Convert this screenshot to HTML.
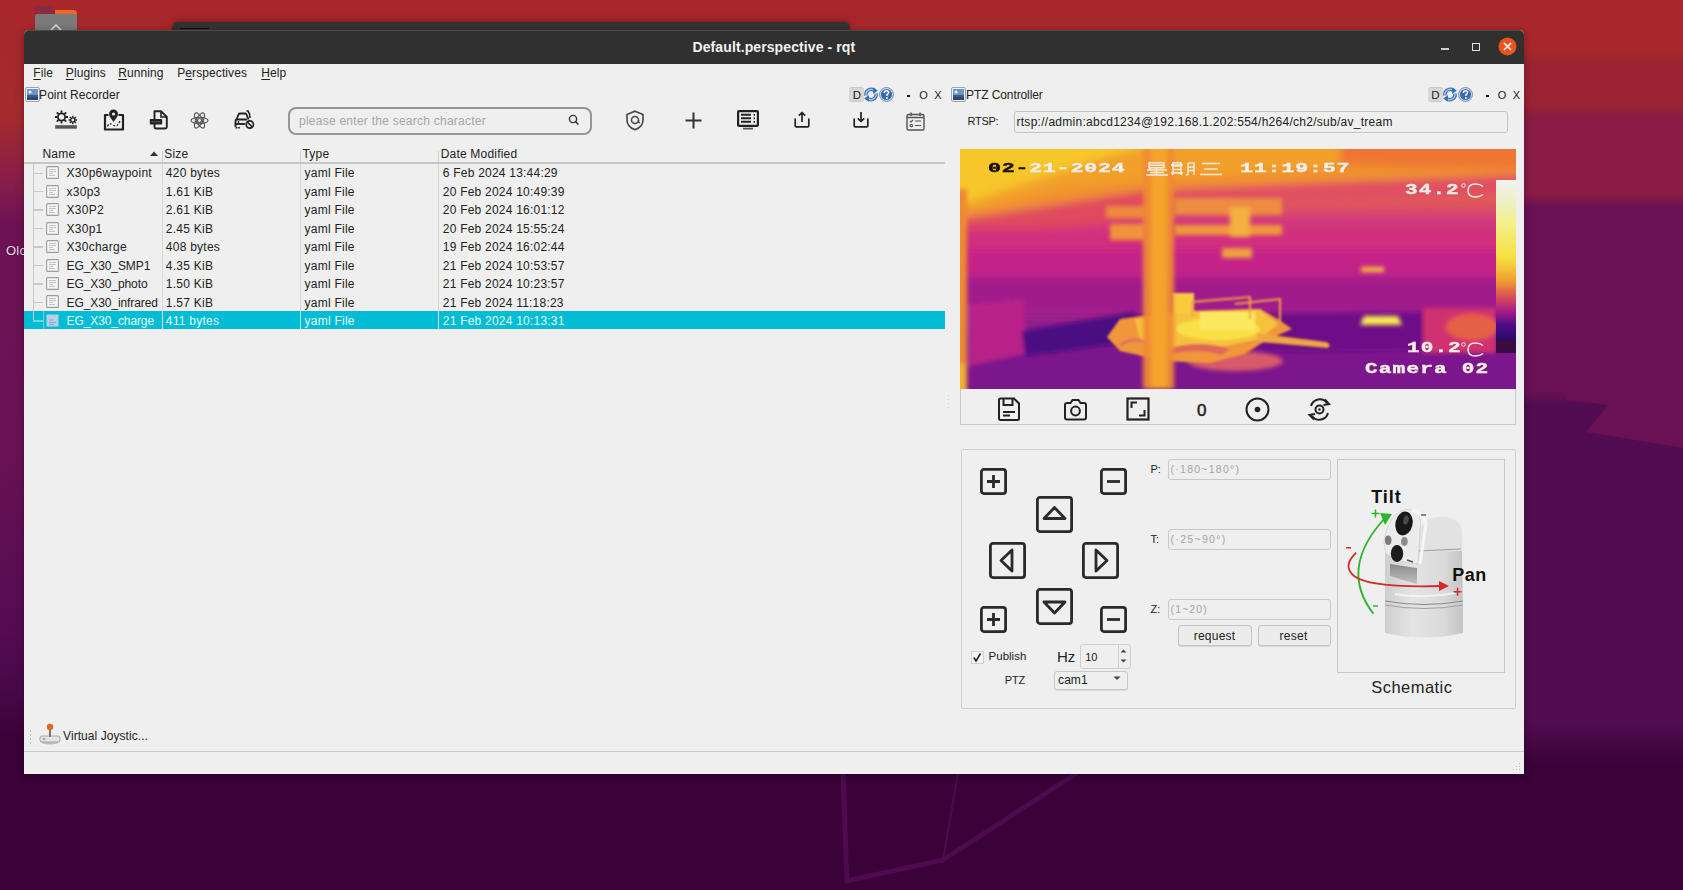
<!DOCTYPE html>
<html><head><meta charset="utf-8">
<style>
*{margin:0;padding:0;box-sizing:border-box}
html,body{width:1683px;height:890px;overflow:hidden;font-family:"Liberation Sans",sans-serif;color:#222;position:relative}
.a{position:absolute}
.t{position:absolute;white-space:pre;line-height:1}
#bg{left:0;top:0;width:1683px;height:890px}
.u{text-decoration:underline;text-underline-offset:2px;text-decoration-thickness:1px}
svg.a{overflow:visible}
</style></head><body>
<div id="bg" class="a"><svg width="1683" height="890" viewBox="0 0 1683 890">
 <defs>
  <linearGradient id="gR" x1="0" y1="0" x2="0" y2="1">
   <stop offset="0" stop-color="#a8272b"/>
   <stop offset="0.056" stop-color="#a8272b"/>
   <stop offset="0.072" stop-color="#9b2432"/>
   <stop offset="0.118" stop-color="#9a2332"/>
   <stop offset="0.132" stop-color="#8a1c46"/>
   <stop offset="0.218" stop-color="#8a1c46"/>
   <stop offset="0.234" stop-color="#6a1055"/>
   <stop offset="0.44" stop-color="#6a1055"/>
   <stop offset="0.455" stop-color="#520c50"/>
   <stop offset="0.81" stop-color="#520c50"/>
   <stop offset="0.86" stop-color="#3a0238"/>
   <stop offset="1" stop-color="#3a0238"/>
  </linearGradient>
  <linearGradient id="gL" x1="0" y1="0" x2="0" y2="1">
   <stop offset="0" stop-color="#a8272b"/>
   <stop offset="0.13" stop-color="#a52a2e"/>
   <stop offset="0.2" stop-color="#8a1e48"/>
   <stop offset="0.25" stop-color="#6e1255"/>
   <stop offset="0.5" stop-color="#6a1256"/>
   <stop offset="0.7" stop-color="#560c52"/>
   <stop offset="0.78" stop-color="#480848"/>
   <stop offset="0.83" stop-color="#3a0238"/>
   <stop offset="1" stop-color="#3a0238"/>
  </linearGradient>
 </defs>
 <rect width="1683" height="890" fill="#3a0238"/>
 <rect x="0" y="0" width="1683" height="50" fill="#a8272b"/>
 <rect x="1524" y="0" width="159" height="890" fill="url(#gR)"/>
 <rect x="0" y="0" width="24" height="890" fill="url(#gL)"/>
 <polygon points="1535,210 1683,210 1683,448 1586,432 1608,405 1567,400 1545,360 1535,300" fill="#6a1055"/>
 <path d="M843 773 L847 881 L943 860 L1077 773" fill="none" stroke="#4e0a4f" stroke-width="5"/>
 <path d="M958 773 L943 860" fill="none" stroke="#4e0a4f" stroke-width="2"/>
</svg></div><div class="t" style="left:6.00px;top:244.10px;font-size:13px;color:#eedcec;font-weight:400;letter-spacing:0.2px;text-shadow:0 0 2px rgba(0,0,0,0.5)">Olc</div><div class="a" style="left:172px;top:22px;width:678px;height:12px;background:#333333;border-radius:6px 6px 0 0;box-shadow:0 -2px 6px rgba(0,0,0,0.25)"></div><div class="a" style="left:180px;top:28.3px;width:29px;height:1.2px;background:#111"></div><svg class="a" style="left:33px;top:4px;" width="46" height="28" viewBox="0 0 46 28"><path d="M2 6 Q2 2 6 2 L18 2 L22 6 L40 6 Q44 6 44 10 L44 28 L2 28 Z" fill="#8c2a44"/><path d="M22 6 L40 6 Q44 6 44 10 L44 12 L22 12 Z" fill="#e8692a"/><rect x="2" y="10" width="42" height="18" rx="3" fill="#7a7a7a"/><path d="M16 28 L23 21 L30 28" fill="none" stroke="#ddd" stroke-width="1.5"/></svg><div class="a" style="left:24px;top:30px;width:1500px;height:743.5px;background:#efefef;border-radius:5px 5px 0 0;box-shadow:0 2px 10px rgba(0,0,0,0.3)"></div><div class="a" style="left:24px;top:30px;width:1500px;height:34px;background:#303030;border-radius:5px 5px 0 0;border-top:1px solid #4a4a4a"></div><div class="t" style="left:692.50px;top:39.95px;font-size:14px;color:#f2f2f2;font-weight:700;letter-spacing:0.1px;">Default.perspective - rqt</div><div class="a" style="left:1441px;top:48px;width:8px;height:1.5px;background:#cfcfcf"></div><div class="a" style="left:1472px;top:43px;width:8px;height:8px;border:1.5px solid #e0e0e0"></div><svg class="a" style="left:1498px;top:37px;" width="19" height="19" viewBox="0 0 19 19"><circle cx="9.5" cy="9.5" r="9" fill="#e95420"/><path d="M6 6 L13 13 M13 6 L6 13" stroke="#fff" stroke-width="1.6"/></svg><div class="t" style="left:33.30px;top:67.44px;font-size:12px;color:#222;font-weight:400;letter-spacing:0.1px;"><span class=u>F</span>ile</div><div class="t" style="left:65.80px;top:67.44px;font-size:12px;color:#222;font-weight:400;letter-spacing:0.1px;"><span class=u>P</span>lugins</div><div class="t" style="left:118.20px;top:67.44px;font-size:12px;color:#222;font-weight:400;letter-spacing:0.1px;"><span class=u>R</span>unning</div><div class="t" style="left:177.20px;top:67.44px;font-size:12px;color:#222;font-weight:400;letter-spacing:0.1px;">P<span class=u>e</span>rspectives</div><div class="t" style="left:261.30px;top:67.44px;font-size:12px;color:#222;font-weight:400;letter-spacing:0.1px;"><span class=u>H</span>elp</div><svg class="a" style="left:24.5px;top:87px;" width="15" height="15" viewBox="0 0 15 15"><rect x="0.5" y="0.5" width="14" height="14" rx="1.5" fill="#f4f4f4" stroke="#9aa4b0"/><rect x="2" y="2" width="11" height="11" fill="#3a5f8f"/><rect x="2" y="2" width="11" height="6" fill="#6d94c4"/><circle cx="5" cy="5" r="1.6" fill="#e8eef8"/><rect x="2" y="10" width="11" height="3" fill="#2c4a70"/></svg><div class="t" style="left:39.10px;top:88.94px;font-size:12px;color:#222;font-weight:400;letter-spacing:0.05px;">Point Recorder</div><svg class="a" style="left:951px;top:87px;" width="15" height="15" viewBox="0 0 15 15"><rect x="0.5" y="0.5" width="14" height="14" rx="1.5" fill="#f4f4f4" stroke="#9aa4b0"/><rect x="2" y="2" width="11" height="11" fill="#3a5f8f"/><rect x="2" y="2" width="11" height="6" fill="#6d94c4"/><circle cx="5" cy="5" r="1.6" fill="#e8eef8"/><rect x="2" y="10" width="11" height="3" fill="#2c4a70"/></svg><div class="t" style="left:966.10px;top:88.84px;font-size:12px;color:#222;font-weight:400;letter-spacing:-0.1px;">PTZ Controller</div><div class="a" style="left:849.0px;top:87.3px;width:15px;height:14.5px;background:#d8d8d8;border-radius:3px;border-top:1px solid #c8c8c8;border-bottom:1px solid #c8c8c8"></div><div class="t" style="left:852.80px;top:90.27px;font-size:11.5px;color:#1a1a1a;font-weight:400;">D</div><svg class="a" style="left:864.0px;top:87px;" width="14" height="15" viewBox="0 0 14 15"><g fill="none" stroke-linecap="butt"><path d="M2 8.5 A5.2 5.2 0 0 1 10.5 3.6" stroke="#3a6cb0" stroke-width="3.4"/><path d="M12 6.5 A5.2 5.2 0 0 1 3.5 11.4" stroke="#3a6cb0" stroke-width="3.4"/><path d="M2 8.5 A5.2 5.2 0 0 1 10.5 3.6" stroke="#9ccaf0" stroke-width="1.4"/><path d="M12 6.5 A5.2 5.2 0 0 1 3.5 11.4" stroke="#9ccaf0" stroke-width="1.4"/></g><path d="M9 0.3 L13.8 3.6 L9.2 7 Z" fill="#3a6cb0"/><path d="M5 8 L0.2 11.4 L4.8 14.7 Z" fill="#3a6cb0"/></svg><svg class="a" style="left:879.0px;top:87px;" width="15" height="15" viewBox="0 0 15 15"><circle cx="7.5" cy="7.5" r="6.9" fill="#e8f0fa" stroke="#3c6aa8" stroke-width="0.8"/><circle cx="7.5" cy="7.5" r="5.6" fill="#3a6aad"/><path d="M5.4 5.9 Q5.4 3.7 7.5 3.7 Q9.6 3.7 9.6 5.6 Q9.6 6.9 7.9 7.7 L7.9 9" fill="none" stroke="#fff" stroke-width="1.5"/><circle cx="7.9" cy="11" r="0.95" fill="#fff"/></svg><div class="a" style="left:907.0px;top:94.5px;width:3px;height:2px;background:#111"></div><div class="t" style="left:919.30px;top:89.69px;font-size:11px;color:#222;font-weight:400;">O</div><div class="t" style="left:934.30px;top:89.69px;font-size:11px;color:#222;font-weight:400;">X</div><div class="a" style="left:1427.5px;top:87.3px;width:15px;height:14.5px;background:#d8d8d8;border-radius:3px;border-top:1px solid #c8c8c8;border-bottom:1px solid #c8c8c8"></div><div class="t" style="left:1431.30px;top:90.27px;font-size:11.5px;color:#1a1a1a;font-weight:400;">D</div><svg class="a" style="left:1442.5px;top:87px;" width="14" height="15" viewBox="0 0 14 15"><g fill="none" stroke-linecap="butt"><path d="M2 8.5 A5.2 5.2 0 0 1 10.5 3.6" stroke="#3a6cb0" stroke-width="3.4"/><path d="M12 6.5 A5.2 5.2 0 0 1 3.5 11.4" stroke="#3a6cb0" stroke-width="3.4"/><path d="M2 8.5 A5.2 5.2 0 0 1 10.5 3.6" stroke="#9ccaf0" stroke-width="1.4"/><path d="M12 6.5 A5.2 5.2 0 0 1 3.5 11.4" stroke="#9ccaf0" stroke-width="1.4"/></g><path d="M9 0.3 L13.8 3.6 L9.2 7 Z" fill="#3a6cb0"/><path d="M5 8 L0.2 11.4 L4.8 14.7 Z" fill="#3a6cb0"/></svg><svg class="a" style="left:1457.5px;top:87px;" width="15" height="15" viewBox="0 0 15 15"><circle cx="7.5" cy="7.5" r="6.9" fill="#e8f0fa" stroke="#3c6aa8" stroke-width="0.8"/><circle cx="7.5" cy="7.5" r="5.6" fill="#3a6aad"/><path d="M5.4 5.9 Q5.4 3.7 7.5 3.7 Q9.6 3.7 9.6 5.6 Q9.6 6.9 7.9 7.7 L7.9 9" fill="none" stroke="#fff" stroke-width="1.5"/><circle cx="7.9" cy="11" r="0.95" fill="#fff"/></svg><div class="a" style="left:1485.5px;top:94.5px;width:3px;height:2px;background:#111"></div><div class="t" style="left:1497.80px;top:89.69px;font-size:11px;color:#222;font-weight:400;">O</div><div class="t" style="left:1512.80px;top:89.69px;font-size:11px;color:#222;font-weight:400;">X</div><svg class="a" style="left:54px;top:109px;" width="24" height="21" viewBox="0 0 24 21"><circle cx="7.5" cy="8" r="3.6" fill="none" stroke="#222" stroke-width="1.7"/><path d="M11.70 8.00 L14.10 8.00 M10.47 10.97 L12.17 12.67 M7.50 12.20 L7.50 14.60 M4.53 10.97 L2.83 12.67 M3.30 8.00 L0.90 8.00 M4.53 5.03 L2.83 3.33 M7.50 3.80 L7.50 1.40 M10.47 5.03 L12.17 3.33 " stroke="#222" stroke-width="1.8"/><circle cx="18.8" cy="11" r="2.1" fill="none" stroke="#222" stroke-width="1.4"/><path d="M21.40 11.00 L23.00 11.00 M20.64 12.84 L21.77 13.97 M18.80 13.60 L18.80 15.20 M16.96 12.84 L15.83 13.97 M16.20 11.00 L14.60 11.00 M16.96 9.16 L15.83 8.03 M18.80 8.40 L18.80 6.80 M20.64 9.16 L21.77 8.03 " stroke="#222" stroke-width="1.4"/><rect x="1.2" y="16.2" width="21.6" height="3.5" fill="#555"/></svg><svg class="a" style="left:103px;top:109px;" width="22" height="22" viewBox="0 0 22 22"><path d="M5.5 6 H2 V20.5 H20 V6 H15.5" fill="none" stroke="#222" stroke-width="2.2" stroke-linejoin="round"/><path d="M10.5 13 C8.5 10 6 7.5 6 5 A4.5 4.5 0 0 1 15 5 C15 7.5 12.5 10 10.5 13 Z" fill="#222"/><circle cx="10.5" cy="5" r="1.6" fill="#efefef"/><path d="M4.5 17.5 Q6 13 10 16 Q14 19 17 12" fill="none" stroke="#222" stroke-width="1.3" stroke-dasharray="2 1.6"/></svg><svg class="a" style="left:149px;top:110px;" width="20" height="20" viewBox="0 0 20 20"><path d="M5.5 1.2 H12 L17.8 7 V17 Q17.8 18.5 16.3 18.5 H7 Q5.5 18.5 5.5 17 Z" fill="none" stroke="#222" stroke-width="1.9" stroke-linejoin="round"/><path d="M12 1.2 V7 H17.8" fill="none" stroke="#222" stroke-width="1.6"/><rect x="0.8" y="9" width="12.4" height="5.5" rx="0.8" fill="#222"/><path d="M2.5 11.8 H11.5" stroke="#777" stroke-width="1" stroke-dasharray="1.5 0.8"/></svg><svg class="a" style="left:190px;top:112px;" width="19" height="17" viewBox="0 0 19 17"><g fill="none" stroke="#555" stroke-width="1.15"><ellipse cx="9.5" cy="8.5" rx="8.5" ry="3.3"/><ellipse cx="9.5" cy="8.5" rx="8.5" ry="3.3" transform="rotate(60 9.5 8.5)"/><ellipse cx="9.5" cy="8.5" rx="8.5" ry="3.3" transform="rotate(-60 9.5 8.5)"/><circle cx="9.5" cy="8.5" r="2"/></g></svg><svg class="a" style="left:234px;top:110px;" width="21" height="20" viewBox="0 0 21 20"><path d="M2.5 9.5 L4.5 4.5 Q5 3.5 6 3.5 H11 Q12 3.5 12.5 4.5 L14.5 9.5" fill="none" stroke="#222" stroke-width="1.8"/><path d="M1.5 17 V11 Q1.5 9.5 3 9.5 H13" fill="none" stroke="#222" stroke-width="1.9"/><path d="M1.5 14 H11" stroke="#222" stroke-width="1.9"/><circle cx="4.5" cy="12" r="0.9" fill="#222"/><path d="M2.5 17 V18.5 M5 17 V18.5" stroke="#222" stroke-width="1.8"/><path d="M12.5 1 L14 1 L15.5 4 L16 8" fill="none" stroke="#222" stroke-width="1.6"/><circle cx="15.8" cy="14.5" r="3.6" fill="#efefef" stroke="#222" stroke-width="1.7"/><path d="M13.3 12 L18.3 17" stroke="#222" stroke-width="1.7"/></svg><div class="a" style="left:288px;top:106.5px;width:303.5px;height:28px;border:2px solid #959595;border-radius:8px;background:#efefef"></div><div class="t" style="left:299.00px;top:115.14px;font-size:12px;color:#a6a6a6;font-weight:400;letter-spacing:0.25px;">please enter the search character</div><svg class="a" style="left:568px;top:114px;" width="12" height="12" viewBox="0 0 12 12"><circle cx="5" cy="5" r="3.6" fill="none" stroke="#333" stroke-width="1.4"/><path d="M7.6 7.6 L10.5 10.5" stroke="#333" stroke-width="1.5"/></svg><svg class="a" style="left:625px;top:110px;" width="20" height="21" viewBox="0 0 20 21"><path d="M10 1.2 L18 4.5 V10 C18 15 14.5 18.2 10 19.8 C5.5 18.2 2 15 2 10 V4.5 Z" fill="none" stroke="#444" stroke-width="1.6"/><circle cx="10" cy="10" r="3.5" fill="none" stroke="#444" stroke-width="1.5"/><path d="M13.5 10 V11.5 Q13.5 13 15 12.5" fill="none" stroke="#444" stroke-width="1.4"/></svg><svg class="a" style="left:685px;top:112px;" width="17" height="17" viewBox="0 0 17 17"><path d="M8.5 0.5 V16.5 M0.5 8.5 H16.5" stroke="#333" stroke-width="2"/></svg><svg class="a" style="left:737px;top:110px;" width="22" height="20" viewBox="0 0 22 20"><rect x="1.1" y="1.1" width="19.8" height="14.8" rx="1" fill="none" stroke="#222" stroke-width="2.2"/><path d="M4 4.8 H14 M4 8.3 H14 M4 11.8 H14" stroke="#222" stroke-width="2"/><path d="M16.5 4.8 H18 M16.5 8.3 H18 M16.5 11.8 H18" stroke="#222" stroke-width="1.8"/><path d="M6 18.6 H16" stroke="#555" stroke-width="1.8"/></svg><svg class="a" style="left:794px;top:111px;" width="16" height="17" viewBox="0 0 16 17"><path d="M1.2 7.5 V14.8 Q1.2 15.9 2.3 15.9 H13.7 Q14.8 15.9 14.8 14.8 V7.5" fill="none" stroke="#222" stroke-width="1.7" stroke-linejoin="round"/><path d="M8 11 V1.5 M4.8 4.7 L8 1.5 L11.2 4.7" fill="none" stroke="#222" stroke-width="1.7" stroke-linejoin="round"/></svg><svg class="a" style="left:853px;top:111px;" width="16" height="17" viewBox="0 0 16 17"><path d="M1.2 7.5 V14.8 Q1.2 15.9 2.3 15.9 H13.7 Q14.8 15.9 14.8 14.8 V7.5" fill="none" stroke="#222" stroke-width="1.7" stroke-linejoin="round"/><path d="M8 1 V10.5 M4.8 7.3 L8 10.5 L11.2 7.3" fill="none" stroke="#222" stroke-width="1.7" stroke-linejoin="round"/></svg><svg class="a" style="left:906px;top:112px;" width="19" height="19" viewBox="0 0 19 19"><rect x="1" y="2.5" width="17" height="15.5" rx="1.5" fill="none" stroke="#555" stroke-width="1.4"/><path d="M5 0.5 V4 M14 0.5 V4 M1 5.5 H18" stroke="#555" stroke-width="1.4"/><path d="M4 9 L5 10 L7 8 M9 9 H15 M9 13.5 H15" fill="none" stroke="#555" stroke-width="1.2"/><circle cx="5.3" cy="13.5" r="1.3" fill="none" stroke="#555" stroke-width="1.1"/></svg><div class="t" style="left:42.50px;top:147.84px;font-size:12px;color:#222;font-weight:400;letter-spacing:0.2px;">Name</div><svg class="a" style="left:150px;top:151px;" width="8" height="5" viewBox="0 0 8 5"><path d="M0 5 L4 0.5 L8 5 Z" fill="#333"/></svg><div class="t" style="left:164.20px;top:147.84px;font-size:12px;color:#222;font-weight:400;letter-spacing:0.2px;">Size</div><div class="t" style="left:302.50px;top:147.84px;font-size:12px;color:#222;font-weight:400;letter-spacing:0.2px;">Type</div><div class="t" style="left:440.70px;top:147.84px;font-size:12px;color:#222;font-weight:400;letter-spacing:0.2px;">Date Modified</div><div class="a" style="left:161.5px;top:151px;width:1px;height:11.5px;background:#d0d0d0"></div><div class="a" style="left:299.5px;top:151px;width:1px;height:11.5px;background:#d0d0d0"></div><div class="a" style="left:437.5px;top:151px;width:1px;height:11.5px;background:#d0d0d0"></div><div class="a" style="left:24px;top:162px;width:921px;height:1.5px;background:#c6c6c6"></div><div class="a" style="left:24px;top:311.2px;width:921px;height:18px;background:#00bcd4"></div><div class="a" style="left:162px;top:163.5px;width:1px;height:166px;background:#d8d8d8"></div><div class="a" style="left:300px;top:163.5px;width:1px;height:166px;background:#d8d8d8"></div><div class="a" style="left:438px;top:163.5px;width:1px;height:166px;background:#d8d8d8"></div><div class="a" style="left:42.5px;top:311.2px;width:1px;height:18px;background:#5fd3e3"></div><div class="a" style="left:32.5px;top:164px;width:1.5px;height:156px;background:#c8c8c8"></div><div class="a" style="left:33px;top:172.5px;width:10px;height:1.5px;background:#c8c8c8"></div><svg class="a" style="left:46px;top:166.29999999999998px;" width="13" height="13" viewBox="0 0 13 13"><rect x="0.6" y="0.6" width="11.8" height="11.8" rx="1" fill="#f6f6f6" stroke="#9c9c9c" stroke-width="1.1"/><path d="M3 3.5 H10 M3 5.5 H10 M3 7.5 H7 M3 9.5 H9" stroke="#c2c2c2" stroke-width="1"/></svg><div class="t" style="left:66.60px;top:167.44px;font-size:12px;color:#222;font-weight:400;letter-spacing:0.25px;">X30p6waypoint</div><div class="t" style="left:165.80px;top:167.44px;font-size:12px;color:#222;font-weight:400;letter-spacing:0.25px;">420 bytes</div><div class="t" style="left:304.50px;top:167.44px;font-size:12px;color:#222;font-weight:400;letter-spacing:0.25px;">yaml File</div><div class="t" style="left:442.80px;top:167.44px;font-size:12px;color:#222;font-weight:400;letter-spacing:0.22px;">6 Feb 2024 13:44:29</div><div class="a" style="left:33px;top:190.5px;width:10px;height:1.5px;background:#c8c8c8"></div><svg class="a" style="left:46px;top:184.74999999999997px;" width="13" height="13" viewBox="0 0 13 13"><rect x="0.6" y="0.6" width="11.8" height="11.8" rx="1" fill="#f6f6f6" stroke="#9c9c9c" stroke-width="1.1"/><path d="M3 3.5 H10 M3 5.5 H10 M3 7.5 H7 M3 9.5 H9" stroke="#c2c2c2" stroke-width="1"/></svg><div class="t" style="left:66.60px;top:185.89px;font-size:12px;color:#222;font-weight:400;letter-spacing:0.25px;">x30p3</div><div class="t" style="left:165.80px;top:185.89px;font-size:12px;color:#222;font-weight:400;letter-spacing:0.25px;">1.61 KiB</div><div class="t" style="left:304.50px;top:185.89px;font-size:12px;color:#222;font-weight:400;letter-spacing:0.25px;">yaml File</div><div class="t" style="left:442.80px;top:185.89px;font-size:12px;color:#222;font-weight:400;letter-spacing:0.22px;">20 Feb 2024 10:49:39</div><div class="a" style="left:33px;top:209.0px;width:10px;height:1.5px;background:#c8c8c8"></div><svg class="a" style="left:46px;top:203.2px;" width="13" height="13" viewBox="0 0 13 13"><rect x="0.6" y="0.6" width="11.8" height="11.8" rx="1" fill="#f6f6f6" stroke="#9c9c9c" stroke-width="1.1"/><path d="M3 3.5 H10 M3 5.5 H10 M3 7.5 H7 M3 9.5 H9" stroke="#c2c2c2" stroke-width="1"/></svg><div class="t" style="left:66.60px;top:204.34px;font-size:12px;color:#222;font-weight:400;letter-spacing:0.25px;">X30P2</div><div class="t" style="left:165.80px;top:204.34px;font-size:12px;color:#222;font-weight:400;letter-spacing:0.25px;">2.61 KiB</div><div class="t" style="left:304.50px;top:204.34px;font-size:12px;color:#222;font-weight:400;letter-spacing:0.25px;">yaml File</div><div class="t" style="left:442.80px;top:204.34px;font-size:12px;color:#222;font-weight:400;letter-spacing:0.22px;">20 Feb 2024 16:01:12</div><div class="a" style="left:33px;top:227.5px;width:10px;height:1.5px;background:#c8c8c8"></div><svg class="a" style="left:46px;top:221.64999999999998px;" width="13" height="13" viewBox="0 0 13 13"><rect x="0.6" y="0.6" width="11.8" height="11.8" rx="1" fill="#f6f6f6" stroke="#9c9c9c" stroke-width="1.1"/><path d="M3 3.5 H10 M3 5.5 H10 M3 7.5 H7 M3 9.5 H9" stroke="#c2c2c2" stroke-width="1"/></svg><div class="t" style="left:66.60px;top:222.79px;font-size:12px;color:#222;font-weight:400;letter-spacing:0.25px;">X30p1</div><div class="t" style="left:165.80px;top:222.79px;font-size:12px;color:#222;font-weight:400;letter-spacing:0.25px;">2.45 KiB</div><div class="t" style="left:304.50px;top:222.79px;font-size:12px;color:#222;font-weight:400;letter-spacing:0.25px;">yaml File</div><div class="t" style="left:442.80px;top:222.79px;font-size:12px;color:#222;font-weight:400;letter-spacing:0.22px;">20 Feb 2024 15:55:24</div><div class="a" style="left:33px;top:246.0px;width:10px;height:1.5px;background:#c8c8c8"></div><svg class="a" style="left:46px;top:240.09999999999997px;" width="13" height="13" viewBox="0 0 13 13"><rect x="0.6" y="0.6" width="11.8" height="11.8" rx="1" fill="#f6f6f6" stroke="#9c9c9c" stroke-width="1.1"/><path d="M3 3.5 H10 M3 5.5 H10 M3 7.5 H7 M3 9.5 H9" stroke="#c2c2c2" stroke-width="1"/></svg><div class="t" style="left:66.60px;top:241.24px;font-size:12px;color:#222;font-weight:400;letter-spacing:0.25px;">X30charge</div><div class="t" style="left:165.80px;top:241.24px;font-size:12px;color:#222;font-weight:400;letter-spacing:0.25px;">408 bytes</div><div class="t" style="left:304.50px;top:241.24px;font-size:12px;color:#222;font-weight:400;letter-spacing:0.25px;">yaml File</div><div class="t" style="left:442.80px;top:241.24px;font-size:12px;color:#222;font-weight:400;letter-spacing:0.22px;">19 Feb 2024 16:02:44</div><div class="a" style="left:33px;top:264.5px;width:10px;height:1.5px;background:#c8c8c8"></div><svg class="a" style="left:46px;top:258.55px;" width="13" height="13" viewBox="0 0 13 13"><rect x="0.6" y="0.6" width="11.8" height="11.8" rx="1" fill="#f6f6f6" stroke="#9c9c9c" stroke-width="1.1"/><path d="M3 3.5 H10 M3 5.5 H10 M3 7.5 H7 M3 9.5 H9" stroke="#c2c2c2" stroke-width="1"/></svg><div class="t" style="left:66.60px;top:259.69px;font-size:12px;color:#222;font-weight:400;letter-spacing:-0.1px;">EG_X30_SMP1</div><div class="t" style="left:165.80px;top:259.69px;font-size:12px;color:#222;font-weight:400;letter-spacing:0.25px;">4.35 KiB</div><div class="t" style="left:304.50px;top:259.69px;font-size:12px;color:#222;font-weight:400;letter-spacing:0.25px;">yaml File</div><div class="t" style="left:442.80px;top:259.69px;font-size:12px;color:#222;font-weight:400;letter-spacing:0.22px;">21 Feb 2024 10:53:57</div><div class="a" style="left:33px;top:283.0px;width:10px;height:1.5px;background:#c8c8c8"></div><svg class="a" style="left:46px;top:276.99999999999994px;" width="13" height="13" viewBox="0 0 13 13"><rect x="0.6" y="0.6" width="11.8" height="11.8" rx="1" fill="#f6f6f6" stroke="#9c9c9c" stroke-width="1.1"/><path d="M3 3.5 H10 M3 5.5 H10 M3 7.5 H7 M3 9.5 H9" stroke="#c2c2c2" stroke-width="1"/></svg><div class="t" style="left:66.60px;top:278.14px;font-size:12px;color:#222;font-weight:400;letter-spacing:-0.1px;">EG_X30_photo</div><div class="t" style="left:165.80px;top:278.14px;font-size:12px;color:#222;font-weight:400;letter-spacing:0.25px;">1.50 KiB</div><div class="t" style="left:304.50px;top:278.14px;font-size:12px;color:#222;font-weight:400;letter-spacing:0.25px;">yaml File</div><div class="t" style="left:442.80px;top:278.14px;font-size:12px;color:#222;font-weight:400;letter-spacing:0.22px;">21 Feb 2024 10:23:57</div><div class="a" style="left:33px;top:301.5px;width:10px;height:1.5px;background:#c8c8c8"></div><svg class="a" style="left:46px;top:295.45px;" width="13" height="13" viewBox="0 0 13 13"><rect x="0.6" y="0.6" width="11.8" height="11.8" rx="1" fill="#f6f6f6" stroke="#9c9c9c" stroke-width="1.1"/><path d="M3 3.5 H10 M3 5.5 H10 M3 7.5 H7 M3 9.5 H9" stroke="#c2c2c2" stroke-width="1"/></svg><div class="t" style="left:66.60px;top:296.59px;font-size:12px;color:#222;font-weight:400;letter-spacing:-0.1px;">EG_X30_infrared</div><div class="t" style="left:165.80px;top:296.59px;font-size:12px;color:#222;font-weight:400;letter-spacing:0.25px;">1.57 KiB</div><div class="t" style="left:304.50px;top:296.59px;font-size:12px;color:#222;font-weight:400;letter-spacing:0.25px;">yaml File</div><div class="t" style="left:442.80px;top:296.59px;font-size:12px;color:#222;font-weight:400;letter-spacing:0.22px;">21 Feb 2024 11:18:23</div><div class="a" style="left:33px;top:320.0px;width:10px;height:1.5px;background:#7fd0da"></div><svg class="a" style="left:46px;top:313.9px;" width="13" height="13" viewBox="0 0 13 13"><rect x="0.5" y="0.5" width="12" height="12" fill="#b8cfe6"/><path d="M3 6 H8 M3 8.5 H10 M3 10.5 H8" stroke="#8aa8c8" stroke-width="1"/></svg><div class="t" style="left:66.60px;top:315.04px;font-size:12px;color:#e8ffff;font-weight:400;letter-spacing:-0.1px;">EG_X30_charge</div><div class="t" style="left:165.80px;top:315.04px;font-size:12px;color:#e8ffff;font-weight:400;letter-spacing:0.25px;">411 bytes</div><div class="t" style="left:304.50px;top:315.04px;font-size:12px;color:#e8ffff;font-weight:400;letter-spacing:0.25px;">yaml File</div><div class="t" style="left:442.80px;top:315.04px;font-size:12px;color:#e8ffff;font-weight:400;letter-spacing:0.22px;">21 Feb 2024 10:13:31</div><svg class="a" style="left:39px;top:723px;" width="22" height="22" viewBox="0 0 22 22"><ellipse cx="11" cy="18" rx="10" ry="3.5" fill="#bdbdbd"/><rect x="1" y="13" width="20" height="6" rx="2" fill="#e4e4e4" stroke="#9a9a9a" stroke-width="0.8"/><rect x="10" y="5" width="2" height="9" fill="#777"/><circle cx="11" cy="4" r="3.2" fill="#e06a22"/><circle cx="5" cy="16" r="1" fill="#e06a22"/></svg><div class="a" style="left:30px;top:730px;width:1px;height:1.5px;background:#c0c0c0"></div><div class="a" style="left:30px;top:734px;width:1px;height:1.5px;background:#c0c0c0"></div><div class="a" style="left:30px;top:738px;width:1px;height:1.5px;background:#c0c0c0"></div><div class="a" style="left:30px;top:742px;width:1px;height:1.5px;background:#c0c0c0"></div><div class="t" style="left:63.10px;top:729.74px;font-size:12px;color:#222;font-weight:400;letter-spacing:0.06px;">Virtual Joystic...</div><div class="a" style="left:24px;top:750.5px;width:1500px;height:1.2px;background:#c8c8c8"></div><div class="a" style="left:1519px;top:763px;width:1px;height:1px;background:#c0c0c0"></div><div class="a" style="left:1516px;top:766px;width:1px;height:1px;background:#c0c0c0"></div><div class="a" style="left:1519px;top:766px;width:1px;height:1px;background:#c0c0c0"></div><div class="a" style="left:1513px;top:769px;width:1px;height:1px;background:#c0c0c0"></div><div class="a" style="left:1516px;top:769px;width:1px;height:1px;background:#c0c0c0"></div><div class="a" style="left:1519px;top:769px;width:1px;height:1px;background:#c0c0c0"></div><div class="a" style="left:948px;top:395px;width:1px;height:1px;background:#cfcfcf"></div><div class="a" style="left:948px;top:399px;width:1px;height:1px;background:#cfcfcf"></div><div class="a" style="left:948px;top:403px;width:1px;height:1px;background:#cfcfcf"></div><div class="a" style="left:948px;top:407px;width:1px;height:1px;background:#cfcfcf"></div><div class="t" style="left:967.60px;top:116.49px;font-size:11px;color:#222;font-weight:400;letter-spacing:-0.3px;">RTSP:</div><div class="a" style="left:1014px;top:111px;width:494px;height:21.5px;border:1px solid #c4c4c4;border-radius:3px;background:#efefef"></div><div class="t" style="left:1016.50px;top:115.64px;font-size:12px;color:#222;font-weight:400;letter-spacing:0.27px;">rtsp://admin:abcd1234@192.168.1.202:554/h264/ch2/sub/av_tream</div><svg class="a" style="left:960px;top:149px;" width="556" height="240" viewBox="0 0 556 240">
<defs>
 <filter id="bl2" x="-20%" y="-20%" width="140%" height="140%"><feGaussianBlur stdDeviation="2"/></filter>
 <filter id="bl4" x="-30%" y="-30%" width="160%" height="160%"><feGaussianBlur stdDeviation="4"/></filter>
 <filter id="bl8" x="-30%" y="-30%" width="160%" height="160%"><feGaussianBlur stdDeviation="8"/></filter>
 <filter id="bl1"><feGaussianBlur stdDeviation="0.8"/></filter>
 <linearGradient id="tv" x1="0" y1="0" x2="0" y2="1">
  <stop offset="0" stop-color="#f4b42c"/>
  <stop offset="0.12" stop-color="#f09430"/>
  <stop offset="0.22" stop-color="#e05a58"/>
  <stop offset="0.3" stop-color="#d23a7c"/>
  <stop offset="0.5" stop-color="#c42e84"/>
  <stop offset="0.65" stop-color="#a4268c"/>
  <stop offset="0.8" stop-color="#7e1a8e"/>
  <stop offset="1" stop-color="#74168c"/>
 </linearGradient>
 <linearGradient id="cbar" x1="0" y1="0" x2="0" y2="1">
  <stop offset="0" stop-color="#f2f2f0"/>
  <stop offset="0.12" stop-color="#eef0c8"/>
  <stop offset="0.25" stop-color="#f4f08a"/>
  <stop offset="0.45" stop-color="#f6e040"/>
  <stop offset="0.58" stop-color="#f0a030"/>
  <stop offset="0.68" stop-color="#d84a5a"/>
  <stop offset="0.76" stop-color="#a81a88"/>
  <stop offset="0.84" stop-color="#4a0c86"/>
  <stop offset="0.92" stop-color="#2c0a6a"/>
  <stop offset="0.93" stop-color="#3a0a42"/>
  <stop offset="1" stop-color="#3a0a42"/>
 </linearGradient>
 <clipPath id="tclip"><rect width="556" height="240"/></clipPath>
</defs>
<g clip-path="url(#tclip)">
<rect width="556" height="240" fill="url(#tv)"/>
<g filter="url(#bl4)">
 <polygon points="-10,-10 570,-10 570,28 400,30 188,40 12,70 -10,72" fill="#f0902e"/>
 <polygon points="-10,-10 560,-10 556,14 400,18 188,30 100,40 12,62 -10,64" fill="#f2a02c"/>
 <polygon points="-10,-10 220,-10 155,5 12,52 -10,56" fill="#f7c62a"/>
 <polygon points="380,-10 570,-10 570,20 380,16" fill="#ee7632"/>
 <polygon points="188,42 570,25 570,48 188,60" fill="#e05062"/>
 <polygon points="-10,70 12,68 188,42 188,70 -10,90" fill="#e0485e"/>
 <rect x="-10" y="80" width="580" height="22" fill="#d22e7e"/>
 <rect x="-10" y="100" width="580" height="35" fill="#c42488"/>
 <rect x="-10" y="128" width="580" height="40" fill="#a01a8c"/>
 <rect x="-10" y="195" width="580" height="60" fill="#7c128c"/>
</g>
<g filter="url(#bl2)">
 <polygon points="9,155 65,150 65,205 9,217" fill="#b82088"/>
 <polygon points="62,182 175,163 175,192 149,196 65,207" fill="#4c0a82"/>
 <polygon points="175,166 560,162 560,200 175,205" fill="#6e0e88"/>
 <polygon points="463,159 536,159 536,204 463,204" fill="#d03070"/>
 <ellipse cx="512" cy="178" rx="26" ry="13" fill="#e66044"/>
 <rect x="-5" y="40" width="12" height="200" fill="#ee8a30"/>
 <rect x="-5" y="215" width="12" height="30" fill="#f4b030"/>
</g>
<g filter="url(#bl2)">
 <rect x="146" y="57" width="40" height="12" fill="#ee8a3a"/>
 <rect x="150" y="75" width="36" height="16" fill="#f0943a"/>
 <rect x="214" y="49" width="108" height="17" fill="#ee8c42"/>
 <rect x="214" y="76" width="108" height="10" fill="#f09a3a"/>
 <rect x="262" y="99" width="30" height="10" fill="#f0a040"/>
 <rect x="270" y="58" width="20" height="30" fill="#f4b040"/>
 <rect x="401" y="118" width="23" height="5" fill="#f2c040"/>
 <polygon points="404,167 438,167 442,176 400,176" fill="#f8ea50"/>
 <ellipse cx="275" cy="212" rx="48" ry="10" fill="#d85a6a"/>
</g>
<g filter="url(#bl1)">
 <polygon points="147,188 160,170 210,163 300,160 318,170 332,180 305,192 285,205 250,214 205,212 160,202" fill="#f0963a"/>
 <polygon points="175,170 230,162 300,160 318,175 300,190 260,198 210,198 180,190" fill="#f6c23e"/>
 <ellipse cx="258" cy="180" rx="42" ry="11" fill="#fae046"/>
 <rect x="240" y="163" width="55" height="18" fill="#fce860"/>
 <rect x="212" y="144" width="22" height="20" fill="#f8cc40"/>
 <path d="M232 168 V153 L290 148 V170 M275 155 L320 150 V172" fill="none" stroke="#f2a040" stroke-width="2"/>
 <path d="M296 184 L366 193 Q372 195 368 199 L300 193 Z" fill="#f0a642"/>
 <path d="M205 200 Q240 190 270 200 L262 206 Q235 198 208 206 Z" fill="#e06858"/>
 <path d="M160 196 Q175 186 190 196" fill="none" stroke="#e07060" stroke-width="3"/>
</g>
<g filter="url(#bl2)">
 <rect x="183" y="0" width="31" height="240" fill="#ef8a32" opacity="0.95"/>
 <rect x="191" y="0" width="16" height="240" fill="#f4a42c"/>
</g>
<rect x="536" y="31" width="20" height="173" fill="url(#cbar)"/>
</g>
</svg><div class="a" style="left:960px;top:389px;width:556px;height:35.5px;border:1px solid #c8c8c8;border-top:none;background:#efefef"></div><div class="t" style="left:988.00px;top:162.37px;font-family:&quot;Liberation Mono&quot;,monospace;font-size:13.5px;font-weight:700;color:#151010;letter-spacing:0.525px;transform:scaleX(1.6);transform-origin:0 0;-webkit-text-stroke:0.45px #151010;text-shadow:0 0 1px rgba(0,0,0,0.2)">02-</div><div class="t" style="left:1029.40px;top:162.37px;font-family:&quot;Liberation Mono&quot;,monospace;font-size:13.5px;font-weight:700;color:#f6eee6;letter-spacing:0.525px;transform:scaleX(1.6);transform-origin:0 0;-webkit-text-stroke:0.45px #f6eee6;text-shadow:0 0 1px rgba(0,0,0,0.2)">21-2024</div><svg class="a" style="left:1144px;top:162px;" width="80" height="14" viewBox="0 0 80 14"><g fill="none" stroke="#f4eae2" stroke-width="1.5">
<rect x="5" y="0.8" width="15" height="5"/><path d="M5 3.3 H20 M3 8 H23 M6 10.5 H20 M12.5 6 V13 M2 13 H24 M7 6 L4 9"/>
<rect x="29" y="0.8" width="8" height="10"/><path d="M29 4 H37 M29 7.5 H37 M27 10.8 H39 M30 11 L28 13 M36 11 L38 13 M27 3 H39 M44 1 V12.5 L42 13 M44 1 H50 V13 M44 5 H50 M44 8.5 H50"/>
<path d="M58 1.5 H76 M60 7 H74 M56 12.5 H78"/>
</g></svg><div class="t" style="left:1240.00px;top:162.37px;font-family:&quot;Liberation Mono&quot;,monospace;font-size:13.5px;font-weight:700;color:#f6eee6;letter-spacing:0.525px;transform:scaleX(1.6);transform-origin:0 0;-webkit-text-stroke:0.45px #f6eee6;text-shadow:0 0 1px rgba(0,0,0,0.2)">11:19:57</div><div class="t" style="left:1405.00px;top:182.50px;font-family:&quot;Liberation Mono&quot;,monospace;font-size:15px;font-weight:700;color:#f6eee6;letter-spacing:0.79px;transform:scaleX(1.4);transform-origin:0 0;-webkit-text-stroke:0.45px #f6eee6;text-shadow:0 0 1px rgba(0,0,0,0.2)">34.2</div><div class="t" style="left:1407.00px;top:341.30px;font-family:&quot;Liberation Mono&quot;,monospace;font-size:15px;font-weight:700;color:#f6eee6;letter-spacing:0.79px;transform:scaleX(1.4);transform-origin:0 0;-webkit-text-stroke:0.45px #f6eee6;text-shadow:0 0 1px rgba(0,0,0,0.2)">10.2</div><svg class="a" style="left:1461px;top:183px;" width="26" height="15" viewBox="0 0 26 15"><circle cx="2.5" cy="2.5" r="1.8" fill="none" stroke="#f6eee6" stroke-width="1"/><path d="M22 3.5 Q19 1 14.5 1 Q7 1 7 7.5 Q7 14 14.5 14 Q19 14 22 11.5" fill="none" stroke="#f6eee6" stroke-width="1.5"/></svg><svg class="a" style="left:1461px;top:342px;" width="26" height="15" viewBox="0 0 26 15"><circle cx="2.5" cy="2.5" r="1.8" fill="none" stroke="#f6eee6" stroke-width="1"/><path d="M22 3.5 Q19 1 14.5 1 Q7 1 7 7.5 Q7 14 14.5 14 Q19 14 22 11.5" fill="none" stroke="#f6eee6" stroke-width="1.5"/></svg><div class="t" style="left:1364.50px;top:361.80px;font-family:&quot;Liberation Mono&quot;,monospace;font-size:15px;font-weight:700;color:#f6eee6;letter-spacing:0.86px;transform:scaleX(1.4);transform-origin:0 0;-webkit-text-stroke:0.45px #f6eee6;text-shadow:0 0 1px rgba(0,0,0,0.2)">Camera 02</div><svg class="a" style="left:997px;top:397px;" width="24" height="25" viewBox="0 0 24 25"><path d="M2 3 Q2 1.5 3.5 1.5 H17 L22 6.5 V21.5 Q22 23 20.5 23 H3.5 Q2 23 2 21.5 Z" fill="none" stroke="#222" stroke-width="2"/><path d="M6.5 1.5 V8 H15.5 V1.5" fill="none" stroke="#222" stroke-width="2"/><path d="M6 15 H18 M6 18.5 H13" stroke="#222" stroke-width="2"/></svg><svg class="a" style="left:1063px;top:397px;" width="25" height="25" viewBox="0 0 25 25"><path d="M2 8 Q2 6 4 6 H7.5 L9.5 3 H15.5 L17.5 6 H21 Q23 6 23 8 V20.5 Q23 22.5 21 22.5 H4 Q2 22.5 2 20.5 Z" fill="none" stroke="#222" stroke-width="2"/><circle cx="12.5" cy="14" r="4.4" fill="none" stroke="#222" stroke-width="2"/></svg><svg class="a" style="left:1126px;top:397px;" width="24" height="24" viewBox="0 0 24 24"><rect x="1.5" y="1.5" width="21" height="21" fill="none" stroke="#222" stroke-width="2.2"/><path d="M5.5 11 V5.5 H11 M18.5 13 V18.5 H13" fill="none" stroke="#222" stroke-width="2"/></svg><div class="t" style="left:1197.00px;top:402.41px;font-size:17px;color:#222;font-weight:400;-webkit-text-stroke:0.5px #222">0</div><svg class="a" style="left:1245px;top:397px;" width="25" height="25" viewBox="0 0 25 25"><circle cx="12.5" cy="12.5" r="11" fill="none" stroke="#222" stroke-width="2"/><circle cx="12.5" cy="12.5" r="2.8" fill="#222"/></svg><svg class="a" style="left:1307px;top:397px;" width="25" height="25" viewBox="0 0 25 25"><circle cx="12.5" cy="12.5" r="4" fill="none" stroke="#222" stroke-width="2"/><circle cx="12.5" cy="12.5" r="1.2" fill="#222"/><path d="M4 9 A9 9 0 0 1 20 6" fill="none" stroke="#222" stroke-width="2"/><path d="M21 16 A9 9 0 0 1 5 19" fill="none" stroke="#222" stroke-width="2"/><path d="M18 2.5 L22 7 L16.5 8" fill="none" stroke="#222" stroke-width="2"/><path d="M7 22.5 L2.5 18 L8 17" fill="none" stroke="#222" stroke-width="2"/></svg><div class="a" style="left:960.5px;top:448.5px;width:555px;height:260px;border:1px solid #cfcfcf;border-radius:2px"></div><svg class="a" style="left:980px;top:468px;" width="27" height="27" viewBox="0 0 27 27"><rect x="1.4" y="1.4" width="24.2" height="24.2" rx="2.5" fill="none" stroke="#2a2a2a" stroke-width="2.8"/><path d="M13.5 7 V20 M7 13.5 H20" stroke="#2a2a2a" stroke-width="2.8"/></svg><svg class="a" style="left:1100px;top:468px;" width="27" height="27" viewBox="0 0 27 27"><rect x="1.4" y="1.4" width="24.2" height="24.2" rx="2.5" fill="none" stroke="#2a2a2a" stroke-width="2.8"/><path d="M7 13.5 H20" stroke="#2a2a2a" stroke-width="2.8"/></svg><svg class="a" style="left:980px;top:606px;" width="27" height="27" viewBox="0 0 27 27"><rect x="1.4" y="1.4" width="24.2" height="24.2" rx="2.5" fill="none" stroke="#2a2a2a" stroke-width="2.8"/><path d="M13.5 7 V20 M7 13.5 H20" stroke="#2a2a2a" stroke-width="2.8"/></svg><svg class="a" style="left:1100px;top:606px;" width="27" height="27" viewBox="0 0 27 27"><rect x="1.4" y="1.4" width="24.2" height="24.2" rx="2.5" fill="none" stroke="#2a2a2a" stroke-width="2.8"/><path d="M7 13.5 H20" stroke="#2a2a2a" stroke-width="2.8"/></svg><svg class="a" style="left:1035.5px;top:495.5px;" width="37" height="37" viewBox="0 0 37 37"><rect x="1.4" y="1.4" width="34.2" height="34.2" rx="2.5" fill="none" stroke="#2a2a2a" stroke-width="2.8"/><path d="M8 22.5 L18.5 11.5 L29 22.5 Z" fill="none" stroke="#2a2a2a" stroke-width="2.8" stroke-linejoin="round"/></svg><svg class="a" style="left:1035.5px;top:588px;" width="37" height="37" viewBox="0 0 37 37"><rect x="1.4" y="1.4" width="34.2" height="34.2" rx="2.5" fill="none" stroke="#2a2a2a" stroke-width="2.8"/><path d="M8 14 L18.5 25 L29 14 Z" fill="none" stroke="#2a2a2a" stroke-width="2.8" stroke-linejoin="round"/></svg><svg class="a" style="left:989px;top:541.5px;" width="37" height="37" viewBox="0 0 37 37"><rect x="1.4" y="1.4" width="34.2" height="34.2" rx="2.5" fill="none" stroke="#2a2a2a" stroke-width="2.8"/><path d="M23 8 L12 18.5 L23 29 Z" fill="none" stroke="#2a2a2a" stroke-width="2.8" stroke-linejoin="round"/></svg><svg class="a" style="left:1081.5px;top:541.5px;" width="37" height="37" viewBox="0 0 37 37"><rect x="1.4" y="1.4" width="34.2" height="34.2" rx="2.5" fill="none" stroke="#2a2a2a" stroke-width="2.8"/><path d="M14 8 L25 18.5 L14 29 Z" fill="none" stroke="#2a2a2a" stroke-width="2.8" stroke-linejoin="round"/></svg><div class="t" style="left:1150.50px;top:463.69px;font-size:11px;color:#222;font-weight:400;">P:</div><div class="a" style="left:1167.5px;top:458.5px;width:163px;height:21px;border:1px solid #c8c8c8;border-radius:3px"></div><div class="t" style="left:1170.60px;top:464.11px;font-size:10.5px;color:#a4a4a4;font-weight:400;letter-spacing:1.25px;">(·180~180°)</div><div class="t" style="left:1150.50px;top:533.69px;font-size:11px;color:#222;font-weight:400;">T:</div><div class="a" style="left:1167.5px;top:528.5px;width:163px;height:21px;border:1px solid #c8c8c8;border-radius:3px"></div><div class="t" style="left:1170.60px;top:534.11px;font-size:10.5px;color:#a4a4a4;font-weight:400;letter-spacing:1.3px;">(·25~90°)</div><div class="t" style="left:1150.50px;top:603.89px;font-size:11px;color:#222;font-weight:400;">Z:</div><div class="a" style="left:1167.5px;top:598.8px;width:163px;height:21px;border:1px solid #c8c8c8;border-radius:3px"></div><div class="t" style="left:1170.60px;top:604.31px;font-size:10.5px;color:#a4a4a4;font-weight:400;letter-spacing:1.1px;">(1~20)</div><div class="a" style="left:1177.5px;top:625px;width:74px;height:21px;border:1px solid #c4c4c4;border-radius:3px;background:#ececec;box-shadow:0 1px 0 #d8d8d8"></div><div class="t" style="left:1193.70px;top:629.64px;font-size:12px;color:#222;font-weight:400;letter-spacing:0.24px;">request</div><div class="a" style="left:1257.5px;top:625px;width:73px;height:21px;border:1px solid #c4c4c4;border-radius:3px;background:#ececec;box-shadow:0 1px 0 #d8d8d8"></div><div class="t" style="left:1279.40px;top:629.64px;font-size:12px;color:#222;font-weight:400;letter-spacing:0.3px;">reset</div><div class="a" style="left:970.5px;top:650.5px;width:13px;height:13px;border:1px solid #d0d0d0;background:#f4f4f4"></div><svg class="a" style="left:971px;top:651px;" width="12" height="12" viewBox="0 0 12 12"><path d="M2.8 6.5 L5 10 L9.5 2.5" fill="none" stroke="#222" stroke-width="1.6"/></svg><div class="t" style="left:988.60px;top:651.47px;font-size:11.5px;color:#222;font-weight:400;">Publish</div><div class="t" style="left:1057.00px;top:649.30px;font-size:15px;color:#222;font-weight:400;">Hz</div><div class="a" style="left:1080px;top:643.5px;width:51px;height:25.5px;border:1px solid #cfcfcf;border-radius:3px;background:#efefef"></div><div class="a" style="left:1117.5px;top:644px;width:1px;height:24.5px;background:#d0d0d0"></div><div class="t" style="left:1085.20px;top:652.19px;font-size:11px;color:#222;font-weight:400;">10</div><svg class="a" style="left:1119px;top:647px;" width="9" height="18" viewBox="0 0 9 18"><path d="M1.5 5.5 L4.5 2.5 L7.5 5.5 Z M1.5 12.5 L4.5 15.5 L7.5 12.5 Z" fill="#444"/></svg><div class="t" style="left:1004.80px;top:674.69px;font-size:11px;color:#222;font-weight:400;letter-spacing:-0.2px;">PTZ</div><div class="a" style="left:1053.5px;top:670.5px;width:74.5px;height:19.5px;border:1px solid #c8c8c8;border-radius:3px;background:#efefef;box-shadow:0 1px 0 #dadada"></div><div class="t" style="left:1058.10px;top:673.84px;font-size:12px;color:#222;font-weight:400;letter-spacing:0.05px;">cam1</div><svg class="a" style="left:1113px;top:676px;" width="8" height="5" viewBox="0 0 8 5"><path d="M0.5 0.5 L4 4 L7.5 0.5 Z" fill="#444"/></svg><div class="a" style="left:1336.5px;top:458.5px;width:168.5px;height:214.5px;border:1px solid #c8c8c8"></div><div class="t" style="left:1371.30px;top:679.43px;font-size:16.5px;color:#222;font-weight:400;letter-spacing:0.45px;">Schematic</div><svg class="a" style="left:1340px;top:480px;" width="160" height="170" viewBox="0 0 160 170">
<defs>
 <linearGradient id="cg" x1="0" y1="0" x2="1" y2="0">
  <stop offset="0" stop-color="#cfcfcf"/><stop offset="0.35" stop-color="#e4e4e4"/><stop offset="0.75" stop-color="#dadada"/><stop offset="1" stop-color="#c4c4c4"/>
 </linearGradient>
 <linearGradient id="sh" x1="0" y1="0" x2="0" y2="1">
  <stop offset="0" stop-color="#8a8a8a"/><stop offset="1" stop-color="#c0c0c0"/>
 </linearGradient>
</defs>
<path d="M45 128 L123 128 L123 153 Q84 162 45 153 Z" fill="url(#cg)"/>
<path d="M45 72 L122 70 L123 128 L45 128 Z" fill="url(#cg)"/>
<path d="M45 121 Q84 128 123 121" fill="none" stroke="#8c8c8c" stroke-width="1.2"/>
<path d="M45 125 Q84 132 123 125" fill="none" stroke="#9a9a9a" stroke-width="0.9"/>
<path d="M55 114 Q84 119 115 113" fill="none" stroke="#f2f2f2" stroke-width="2"/>
<path d="M50 84 L77 88 L77 104 Q62 100 50 96 Z" fill="url(#sh)"/>
<path d="M76 72 Q76 44 92 38 Q110 34 120 44 Q123 50 122 71 Z" fill="#e2e2e2"/>
<path d="M77 71 L121 69" stroke="#9c9c9c" stroke-width="1"/>
<path d="M44 62 Q46 44 56 34 Q66 27 76 31 Q82 36 80 50 L78 84 Q62 84 46 74 Z" fill="#ececec" stroke="#c8c8c8" stroke-width="0.6"/>
<path d="M72 30 Q84 34 86 44 L80 84" fill="none" stroke="#f6f6f6" stroke-width="3"/>
<ellipse cx="64" cy="43.5" rx="8.6" ry="12" transform="rotate(12 64 43.5)" fill="#181818"/>
<ellipse cx="66" cy="40" rx="2.6" ry="4.5" transform="rotate(12 66 40)" fill="#4a4a4a"/>
<ellipse cx="57" cy="73.5" rx="6.2" ry="8.5" fill="#1c1c1c"/>
<ellipse cx="48.2" cy="60.2" rx="3.3" ry="4.8" fill="#7c7c7c"/>
<ellipse cx="64.4" cy="61.5" rx="3.3" ry="4.4" fill="#8c8c8c"/>
<path d="M67 80 L73 82" stroke="#555" stroke-width="1.5"/>
<path d="M81 35 L86 35" stroke="#555" stroke-width="1.4"/>
</svg><svg class="a" style="left:1340px;top:480px;" width="160" height="170" viewBox="0 0 160 170"><path d="M33.4 133.7 Q-2 88 46 37" fill="none" stroke="#2ab52a" stroke-width="1.8"/><path d="M40 33 L52 34 L45 45 Z" fill="#2ab52a"/><path d="M31.5 33.4 H39.5 M35.5 29.4 V37.4" stroke="#2ab52a" stroke-width="1.5"/><path d="M33 126 H38" stroke="#2ab52a" stroke-width="1.5"/><path d="M16.2 72.6 Q2 86 14 96 Q30 108 100 106" fill="none" stroke="#d42a2a" stroke-width="1.8"/><path d="M99 101 L109 106 L99 111 Z" fill="#d42a2a"/><path d="M6 67.8 H11" stroke="#d42a2a" stroke-width="1.5"/><path d="M113.5 111.7 H121.5 M117.5 107.7 V115.7" stroke="#d42a2a" stroke-width="1.5"/></svg><div class="t" style="left:1371.30px;top:487.76px;font-size:18px;color:#111;font-weight:700;letter-spacing:0.9px;">Tilt</div><div class="t" style="left:1452.20px;top:566.36px;font-size:18px;color:#111;font-weight:700;letter-spacing:0.5px;">Pan</div></body></html>
